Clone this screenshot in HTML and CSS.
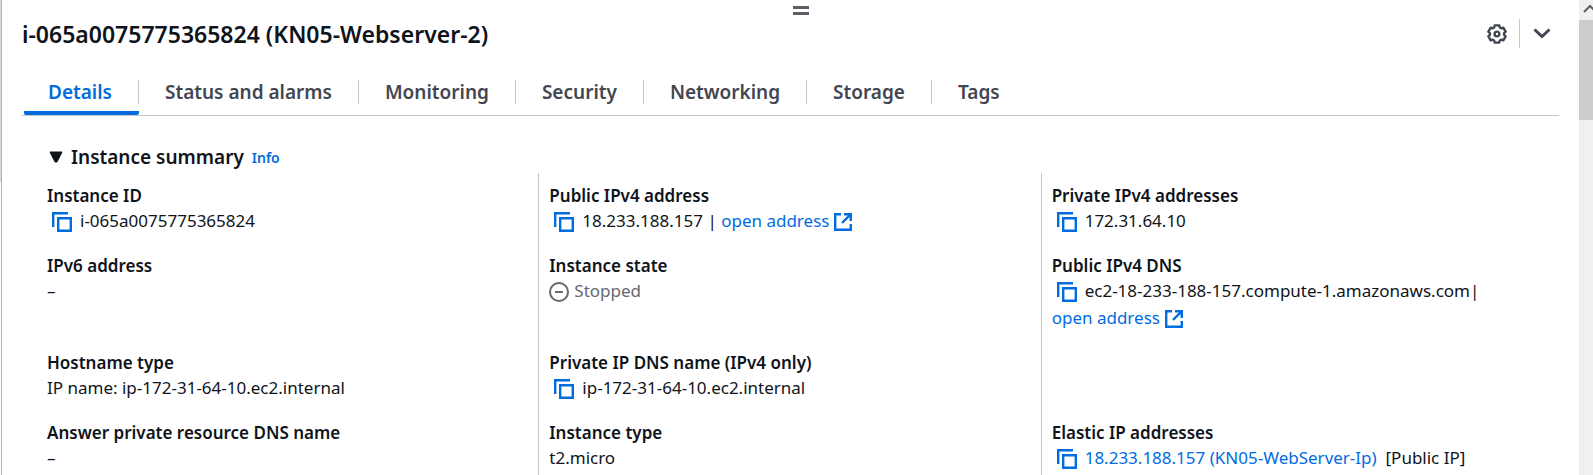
FILE: index.html
```html
<!DOCTYPE html>
<html lang="en">
<head>
<meta charset="utf-8">
<title>Instance details</title>
<link rel="stylesheet" href="styles.css">
</head>
<body>
<svg class="sprite" aria-hidden="true">
  <symbol id="copy" viewBox="0 0 20 20"><path d="M1.200 15V1.200H16M6.200 6.200h12.600v12.600H6.200z"/></symbol>
  <symbol id="external" viewBox="0 0 18 18"><path d="M7 1.200H1.200v15.600h15.600V11M10 1.200h6.800V8M16.800 1.200L8 10"/></symbol>
</svg>
<div class="shell">
  <div class="edge"></div>
  <main class="panel">
    <div class="handle-bar">
      <button class="handle" aria-label="Resize panel"><span></span><span></span></button>
    </div>
    <header class="header">
      <h1 class="title">i-065a0075775365824 (KN05-Webserver-2)</h1>
      <div class="actions">
        <button class="icon-button" aria-label="Preferences">
          <svg class="gear" viewBox="0 0 20 20"><path d="M7.700 1.400H12.300Q12.600 5.500 16.300 3.700L18.600 7.700Q15.200 10 18.600 12.300L16.300 16.300Q12.600 14.500 12.300 18.600H7.700Q7.400 14.500 3.700 16.300L1.400 12.300Q4.800 10 1.400 7.700L3.700 3.700Q7.400 5.500 7.700 1.400z"/><circle cx="10" cy="10" r="2.400"/></svg>
        </button>
        <button class="icon-button collapse" aria-label="Collapse panel">
          <svg class="chevron" viewBox="0 0 18 11"><path d="M1.500 1.500L9 8.500l7.500-7"/></svg>
        </button>
      </div>
    </header>
    <nav class="tabs" role="tablist">
      <button class="tab active" role="tab" aria-selected="true"><span>Details</span></button>
      <button class="tab" role="tab"><span>Status and alarms</span></button>
      <button class="tab" role="tab"><span>Monitoring</span></button>
      <button class="tab" role="tab"><span>Security</span></button>
      <button class="tab" role="tab"><span>Networking</span></button>
      <button class="tab" role="tab"><span>Storage</span></button>
      <button class="tab" role="tab"><span>Tags</span></button>
    </nav>
    <section class="summary">
      <div class="summary-head">
        <button class="toggle" aria-expanded="true"><svg class="caret" viewBox="0 0 14 12"><path d="M1 1h12L8 11H6z"/></svg><span>Instance summary</span></button>
        <a class="info" href="#">Info</a>
      </div>
      <dl class="grid">
        <div class="field"><dt>Instance ID</dt><dd><button class="copy" aria-label="Copy"><svg><use href="#copy"/></svg></button>i-065a0075775365824</dd></div>
        <div class="field"><dt>Public IPv4 address</dt><dd><button class="copy" aria-label="Copy"><svg><use href="#copy"/></svg></button>18.233.188.157 | <a href="#">open address<svg class="external"><use href="#external"/></svg></a></dd></div>
        <div class="field"><dt>Private IPv4 addresses</dt><dd><button class="copy" aria-label="Copy"><svg><use href="#copy"/></svg></button>172.31.64.10</dd></div>
        <div class="field"><dt>IPv6 address</dt><dd>–</dd></div>
        <div class="field"><dt>Instance state</dt><dd class="stopped"><svg class="status" viewBox="0 0 20 20"><circle cx="10" cy="10" r="9"/><path d="M6 10h8"/></svg>Stopped</dd></div>
        <div class="field"><dt>Public IPv4 DNS</dt><dd><button class="copy" aria-label="Copy"><svg><use href="#copy"/></svg></button>ec2-18-233-188-157.compute-1.amazonaws.com| <a href="#">open address<svg class="external"><use href="#external"/></svg></a></dd></div>
        <div class="field"><dt>Hostname type</dt><dd>IP name: ip-172-31-64-10.ec2.internal</dd></div>
        <div class="field"><dt>Private IP DNS name (IPv4 only)</dt><dd><button class="copy" aria-label="Copy"><svg><use href="#copy"/></svg></button>ip-172-31-64-10.ec2.internal</dd></div>
        <div class="field"></div>
        <div class="field"><dt>Answer private resource DNS name</dt><dd>–</dd></div>
        <div class="field"><dt>Instance type</dt><dd>t2.micro</dd></div>
        <div class="field"><dt>Elastic IP addresses</dt><dd><button class="copy" aria-label="Copy"><svg><use href="#copy"/></svg></button><a href="#">18.233.188.157 (KN05-WebServer-Ip)</a>&nbsp; [Public IP]</dd></div>
      </dl>
    </section>
  </main>
  <div class="scrollbar" aria-hidden="true">
    <div class="scroll-up"><svg viewBox="0 0 14 10"><path d="M1 9l6-6 6 6"/></svg></div>
    <div class="thumb"></div>
  </div>
</div>
</body>
</html>
```
FILE: styles.css
```css
* { box-sizing: border-box; }
body {
  margin: 0;
  background: #fff;
  color: #0f141a;
  font-family: "Noto Sans", "Open Sans", sans-serif;
  font-size: 17px;
  line-height: 27px;
}
button {
  margin: 0;
  padding: 0;
  border: 0;
  background: none;
  color: inherit;
  font: inherit;
}
a { color: #006ce0; text-decoration: none; white-space: nowrap; }
svg { fill: none; stroke: currentColor; stroke-width: 2; }
.sprite { display: none; }

.shell { display: flex; height: 100vh; overflow: hidden; }
.edge {
  width: 2px;
  border-right: 1px solid #b4b4b8;
  background: linear-gradient(#d8d8dc 182px, #fff 182px);
}
.panel { flex: 1; min-width: 0; padding: 6px 20px 0; }

.handle-bar { display: flex; justify-content: center; padding-left: 20px; }
.handle {
  display: flex;
  flex-direction: column;
  gap: 3px;
  width: 16px;
}
.handle span { height: 3px; background: #5a5e67; }

.header { display: flex; justify-content: space-between; align-items: center; height: 37px; }
.title { margin: 0; font-size: 23px; font-weight: 600; line-height: 28px; }
.actions { display: flex; align-items: center; color: #424650; }
.icon-button { display: flex; align-items: center; height: 29px; }
.collapse { margin-left: 12px; padding: 0 8px 0 13px; border-left: 1px solid #c6c6cd; }
.gear { width: 20px; height: 20px; stroke-linejoin: round; stroke-width: 2.4; }
.chevron { width: 18px; height: 11px; stroke-width: 3; }

.tabs {
  display: flex;
  align-items: flex-end;
  margin-top: 28px;
  border-bottom: 1px solid #c6c6cd;
}
.tab {
  padding: 0 0 11px;
  color: #424650;
  font-size: 19px;
  font-weight: 600;
  line-height: 24px;
}
.tab span { display: block; padding: 0 26px; border-right: 1px solid #c6c6cd; }
.tab:last-child span { border: 0; }
.active {
  margin-left: 2px;
  padding-bottom: 7px;
  border-bottom: 4px solid #006ce0;
  border-radius: 2px;
  color: #006ce0;
}
.active span { padding-left: 24px; }

.summary { padding: 27px 28px 0 25px; }
.summary-head { display: flex; align-items: baseline; gap: 8px; margin-bottom: 2px; }
.toggle { display: flex; align-items: center; gap: 8px; font-size: 19px; font-weight: 600; line-height: 28px; }
.caret { width: 14px; height: 12px; margin-left: 2px; fill: currentColor; stroke-width: 1; }
.info { font-size: 14px; font-weight: 600; }

.grid { display: grid; grid-template-columns: repeat(3, 1fr); column-gap: 23px; margin: 0; }
.field { position: relative; padding: 11px 0 9px; }
.field:not(:nth-child(3n + 1))::before {
  content: "";
  position: absolute;
  top: 0;
  bottom: 0;
  left: -11px;
  border-left: 1px solid #c6c6cd;
}
dt { font-weight: 600; line-height: 23px; }
dd { margin: 0; }
.copy { margin: 0 8px 0 5px; color: #006ce0; vertical-align: middle; }
.copy svg { display: block; width: 20px; height: 20px; stroke-width: 2.400; }
.external { width: 18px; height: 18px; margin-left: 5px; stroke-width: 2.400; vertical-align: middle; }
.status { width: 20px; height: 20px; margin-right: 5px; vertical-align: middle; }
.stopped { color: #656871; }

.scrollbar { width: 14px; overflow: hidden; background: #f0f0f0; }
.scroll-up { height: 20px; padding: 3px 0 0 4px; color: #606060; }
.scroll-up svg { display: block; width: 14px; height: 10px; }
.thumb { height: 100px; background: #cdcdcd; }
```
